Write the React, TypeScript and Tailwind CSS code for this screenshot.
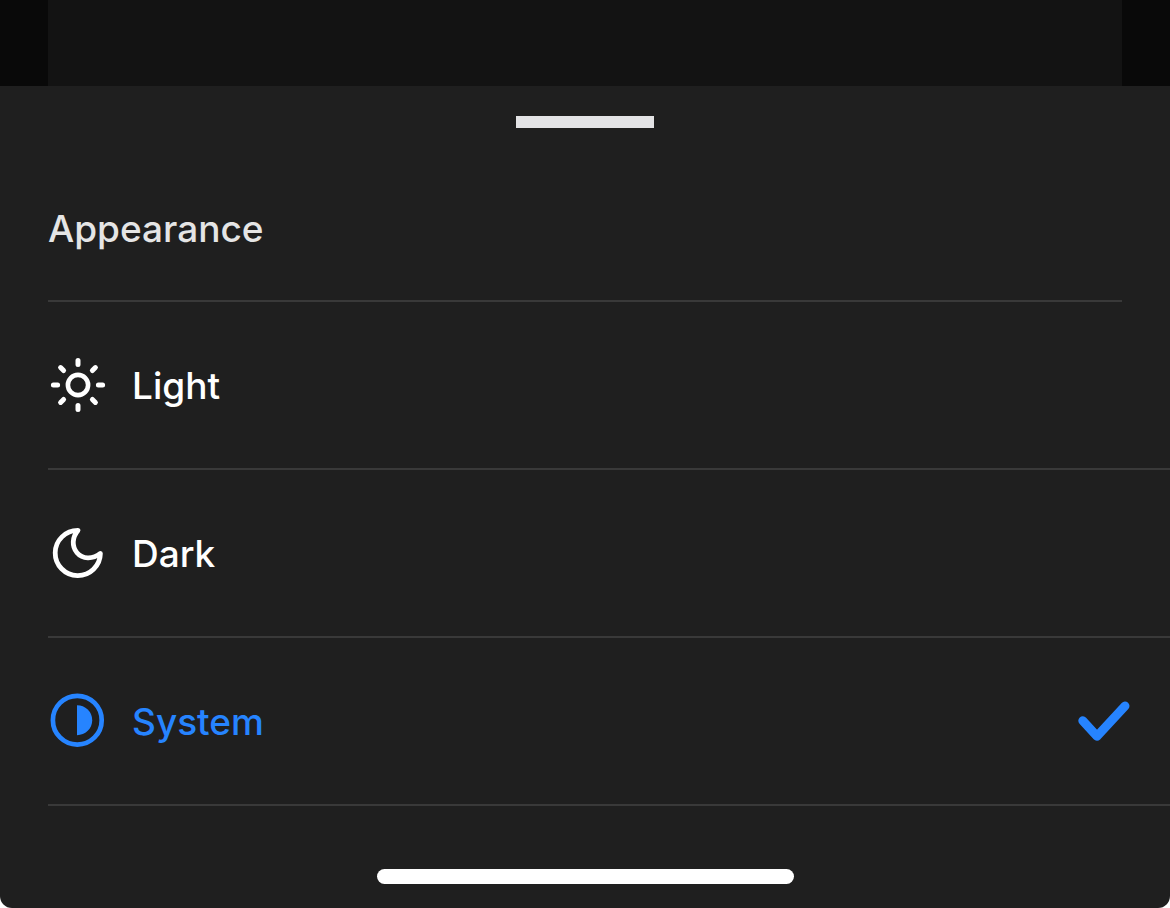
import { useState } from "react";
import type { ReactNode } from "react";
import clsx from "clsx";

type Theme = "light" | "dark" | "system";

function SunIcon() {
  return (
    <svg
      viewBox="0 0 60 60"
      className="size-15 shrink-0"
      fill="none"
      stroke="currentColor"
      strokeLinecap="round"
      aria-hidden="true"
    >
      <circle cx="30" cy="30" r="10.1" strokeWidth="4.6" />
      <path
        strokeWidth="5"
        d="M30 5.4v4.2M30 50.4v4.2M5.4 30h4.2M50.4 30h4.2M12.6 12.6l3 3M44.4 44.4l3 3M47.4 12.6l-3 3M15.6 44.4l-3 3"
      />
    </svg>
  );
}

function MoonIcon() {
  return (
    <svg
      viewBox="0 0 60 60"
      className="size-15 shrink-0"
      fill="none"
      stroke="currentColor"
      strokeWidth="4.8"
      strokeLinecap="round"
      strokeLinejoin="round"
      aria-hidden="true"
    >
      <path d="M30 7.4A22.6 22.6 0 1 0 52.4 30.4C44.5 36.5 34.5 36.2 29 29.7C23.7 23.2 24 14.5 30 7.4Z" />
    </svg>
  );
}

function ContrastIcon() {
  return (
    <svg viewBox="0 0 60 60" className="size-15 shrink-0" aria-hidden="true">
      <circle
        cx="29.3"
        cy="29.2"
        r="24.4"
        fill="none"
        stroke="currentColor"
        strokeWidth="4.7"
      />
      <path fill="currentColor" d="M29 14.2a15.2 15 0 0 1 0 30Z" />
    </svg>
  );
}

function CheckIcon() {
  return (
    <svg
      viewBox="0 0 60 60"
      className="ml-auto size-15 shrink-0"
      fill="none"
      stroke="currentColor"
      strokeWidth="9"
      strokeLinecap="round"
      strokeLinejoin="round"
      aria-hidden="true"
    >
      <path d="M8.8 29.8L23 45.2L51 15" />
    </svg>
  );
}

const options: { value: Theme; label: string; icon: ReactNode }[] = [
  { value: "light", label: "Light", icon: <SunIcon /> },
  { value: "dark", label: "Dark", icon: <MoonIcon /> },
  { value: "system", label: "System", icon: <ContrastIcon /> },
];

export default function App() {
  const [theme, setTheme] = useState<Theme>("system");

  return (
    <div className="flex min-h-screen flex-col bg-white font-['Inter',sans-serif] text-[37px] leading-12 font-medium">
      <div className="flex min-h-20 flex-1 bg-[#090909] px-12">
        <div className="flex-1 bg-[#131313]" />
      </div>
      <main className="rounded-b-xl bg-[#1f1f1f] pt-[30px] pb-6 text-white">
        <div className="mx-auto h-3 w-[138px] bg-[#e3e3e5]" />
        <h1 className="mx-12 mt-[77px] border-b-2 border-[#393939] pb-[47px] text-[#e5e5e5]">
          Appearance
        </h1>
        <div role="radiogroup" aria-label="Appearance" className="pl-12">
          {options.map((option) => (
            <label
              key={option.value}
              className={clsx(
                "relative flex h-42 cursor-pointer items-center gap-6 border-b-2 border-[#393939] pr-9",
                theme === option.value && "text-[#2684ff]"
              )}
            >
              <input
                type="radio"
                name="theme"
                value={option.value}
                checked={theme === option.value}
                onChange={() => setTheme(option.value)}
                className="sr-only"
              />
              {option.icon}
              <span className="pt-0.5">{option.label}</span>
              {theme === option.value && <CheckIcon />}
            </label>
          ))}
        </div>
        <div className="mx-auto mt-[63px] h-[15px] w-[417px] rounded-full bg-white" />
      </main>
    </div>
  );
}
